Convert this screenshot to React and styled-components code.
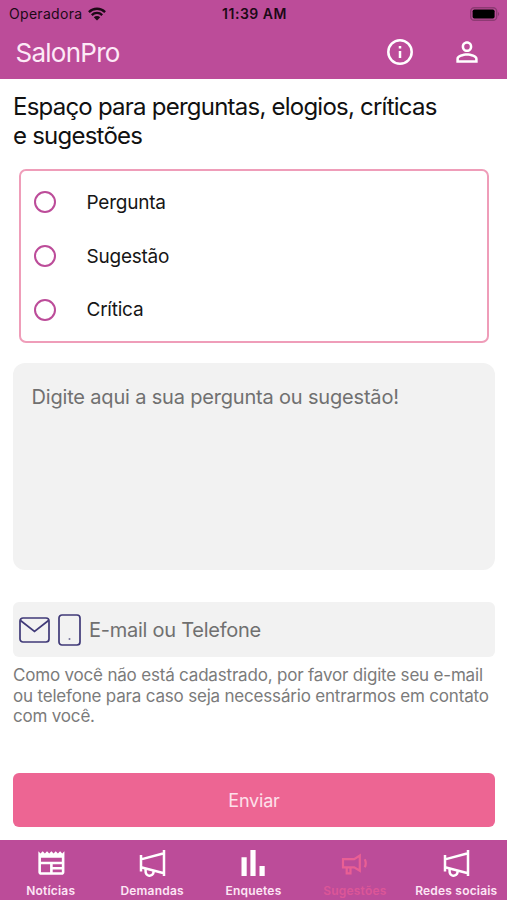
import React from "react";
import styled, { createGlobalStyle } from "styled-components";

const GlobalStyle = createGlobalStyle`
  * {
    box-sizing: border-box;
  }

  body {
    margin: 0;
    background: #fff;
    font-family: Inter, "Liberation Sans", sans-serif;
  }
`;

const Screen = styled.div`
  width: 507px;
  height: 900px;
  display: flex;
  flex-direction: column;
  overflow: hidden;
  background: #fff;
`;

const Header = styled.header`
  height: 79px;
  flex: none;
  background: #bc4c99;
`;

const StatusBar = styled.div`
  height: 27px;
  padding: 0 7px 0 9px;
  display: grid;
  grid-template-columns: 1fr auto 1fr;
  align-items: center;
  color: #1c0916;
`;

const Carrier = styled.div`
  display: flex;
  align-items: center;
  gap: 6px;
  font-size: 14px;
  letter-spacing: 0.3px;
`;

const Clock = styled.div`
  font-size: 14px;
  font-weight: 600;
  letter-spacing: 0.5px;
`;

const Battery = styled.div`
  display: flex;
  justify-content: flex-end;
`;

const AppBar = styled.div`
  height: 50px;
  padding: 0 24px 0 15.5px;
  display: flex;
  align-items: center;
`;

const AppTitle = styled.h1`
  flex: 1;
  margin: 0;
  font-size: 26px;
  font-weight: 400;
  letter-spacing: -0.75px;
  color: #fdeaf7;
`;

const Actions = styled.div`
  display: flex;
  align-items: center;
  gap: 38px;
`;

const IconButton = styled.button`
  display: flex;
  padding: 0;
  border: 0;
  background: none;
  color: #fff;
`;

const Content = styled.main`
  flex: 1;
  padding: 13px 12px 0 13px;
  display: flex;
  flex-direction: column;
`;

const Heading = styled.h2`
  margin: 0;
  font-size: 24px;
  font-weight: 400;
  line-height: 29px;
  letter-spacing: -0.77px;
  white-space: pre-line;
  color: #111;
`;

const Options = styled.div`
  height: 174px;
  margin: 19px 6px 0;
  padding: 4.5px 13px;
  border: 2px solid #ef9db9;
  border-radius: 7px;
`;

const Option = styled.label`
  height: 53.7px;
  display: flex;
  align-items: center;
  gap: 30.5px;
  font-size: 19px;
  line-height: 24px;
  letter-spacing: -0.23px;
  color: #161616;
`;

const OptionText = styled.span`
  padding-top: 1px;
`;

const Radio = styled.span`
  width: 22px;
  height: 22px;
  border: 2.5px solid #bc4c99;
  border-radius: 50%;
`;

const Message = styled.div`
  height: 207px;
  margin-top: 20px;
  padding: 22px 18.5px;
  border-radius: 12px;
  background: #f2f2f2;
  font-size: 20px;
  line-height: 25px;
  letter-spacing: -0.18px;
  color: #707070;
`;

const Contact = styled.div`
  height: 55px;
  margin-top: 32px;
  padding-left: 6px;
  display: flex;
  align-items: center;
  border-radius: 6px;
  background: #f2f2f2;
  font-size: 20px;
  letter-spacing: -0.25px;
  color: #707070;

  svg {
    margin-right: 8px;
  }
`;

const Hint = styled.p`
  margin: 8px 0 0;
  font-size: 17px;
  line-height: 20.5px;
  letter-spacing: -0.19px;
  white-space: pre;
  color: #7b7b7b;
`;

const Submit = styled.button`
  height: 54px;
  margin-top: 46px;
  padding: 1px 0 0;
  border: 0;
  border-radius: 6px;
  background: #ed6593;
  font-family: inherit;
  font-size: 18px;
  letter-spacing: -0.2px;
  color: #fde0ea;
`;

const TabBar = styled.nav`
  height: 60px;
  flex: none;
  display: grid;
  grid-template-columns: repeat(5, 1fr);
  background: #bc4c99;
`;

const Tab = styled.div`
  padding-top: 8px;
  display: flex;
  flex-direction: column;
  align-items: center;
  gap: 5px;
  font-size: 12px;
  font-weight: 600;
  line-height: 15px;
  letter-spacing: 0.2px;
  white-space: nowrap;
  color: ${(props) => (props.$active ? "#dc5697" : "#fde6f5")};

  svg {
    color: ${(props) => (props.$active ? "#e95f94" : "#fff")};
  }
`;

const WifiIcon = () => (
  <svg width="18" height="14" viewBox="0 0 18 14" fill="none" stroke="currentColor" strokeWidth="2.3">
    <path d="M0.9 5.1a11.5 11.5 0 0 1 16.2 0" />
    <path d="M3.8 8.1a7.4 7.4 0 0 1 10.4 0" />
    <path d="M9 13.5 5.8 10.2a4.6 4.6 0 0 1 6.4 0z" fill="currentColor" stroke="none" />
  </svg>
);

const BatteryIcon = () => (
  <svg width="30" height="14" viewBox="0 0 30 14">
    <rect x="0.7" y="0.7" width="26" height="12.6" rx="3.6" fill="none" stroke="#8d3a73" strokeWidth="1.4" />
    <rect x="2.6" y="2.4" width="22" height="9.2" rx="1.8" fill="#000" />
    <path d="M28 5v4c1.6-.6 1.6-3.4 0-4z" fill="#8d3a73" />
  </svg>
);

const InfoIcon = () => (
  <svg width="26" height="26" viewBox="0 0 26 26" fill="none" stroke="currentColor" strokeWidth="2.5">
    <circle cx="13" cy="13" r="11.7" />
    <path d="M13 12v7M13 7v2.6" />
  </svg>
);

const PersonIcon = () => (
  <svg width="32" height="32" viewBox="0 0 24 24" fill="currentColor">
    <path d="M12 5.9a2.1 2.1 0 1 1 0 4.2 2.1 2.1 0 0 1 0-4.2m0 9c2.97 0 6.1 1.46 6.1 2.1v1.1H5.9V17c0-.64 3.13-2.1 6.1-2.1M12 4C9.79 4 8 5.79 8 8s1.79 4 4 4 4-1.79 4-4-1.79-4-4-4m0 9c-2.67 0-8 1.34-8 4v3h16v-3c0-2.66-5.33-4-8-4" />
  </svg>
);

const MailIcon = () => (
  <svg width="31" height="26" viewBox="0 0 31 26" fill="none" stroke="#403a78" strokeWidth="1.7">
    <rect x="1" y="1" width="29" height="24" rx="3" />
    <path d="M1.5 3.5 15.5 14.5 29.5 3.5" />
  </svg>
);

const PhoneIcon = () => (
  <svg width="23" height="32" viewBox="0 0 23 32" fill="none" stroke="#403a78" strokeWidth="1.7">
    <rect x="1" y="1" width="21" height="30" rx="3" />
    <circle cx="11.5" cy="25" r="1" fill="#77759a" stroke="none" />
  </svg>
);

const NewsIcon = () => (
  <svg width="30" height="30" viewBox="0.2 0.5 23 23" fill="currentColor">
    <path d="m22 3-1.67 1.67L18.67 3 17 4.67 15.33 3l-1.66 1.67L12 3l-1.67 1.67L8.67 3 7 4.67 5.33 3 3.67 4.67 2 3v16c0 1.1.9 2 2 2h16c1.1 0 2-.9 2-2zM11 19H4v-6h7zm9 0h-7v-2h7zm0-4h-7v-2h7zm0-4H4V8h16z" />
  </svg>
);

const MegaphoneIcon = () => (
  <svg width="30" height="30" viewBox="-1 -1 30 30" fill="none" stroke="currentColor" strokeWidth="2.5">
    <path d="M3 6v16.5M26 1v26M3 10.4 26 4.2M3 18.2 26 24.2" />
    <path d="M7.6 20v2.2a4 4 0 0 0 8 .9v-1" />
  </svg>
);

const ChartIcon = () => (
  <svg width="30" height="30" viewBox="-1 -1 30 30" fill="currentColor">
    <path d="M2.5 8.2h5.2V27H2.5zM11.4 1h5.2v26h-5.2zM20.5 17h5.2v10h-5.2z" />
  </svg>
);

const SpeakerIcon = () => (
  <svg width="30" height="30" viewBox="-1 -1 30 30" fill="none" stroke="currentColor" strokeWidth="2.2">
    <path d="M2 10.2h11.2l5.6-3.6v15.2l-5.6-3.4H2zM5.7 18.4v6h3.8v-6" />
    <path d="M23.7 10.2q2.2 4 0 8" />
  </svg>
);

const options = ["Pergunta", "Sugestão", "Crítica"];

const tabs = [
  { label: "Notícias", Icon: NewsIcon },
  { label: "Demandas", Icon: MegaphoneIcon },
  { label: "Enquetes", Icon: ChartIcon },
  { label: "Sugestões", Icon: SpeakerIcon, active: true },
  { label: "Redes sociais", Icon: MegaphoneIcon },
];

function App() {
  return (
    <>
      <GlobalStyle />
      <Screen>
        <Header>
          <StatusBar>
            <Carrier>
              Operadora
              <WifiIcon />
            </Carrier>
            <Clock>11:39 AM</Clock>
            <Battery>
              <BatteryIcon />
            </Battery>
          </StatusBar>
          <AppBar>
            <AppTitle>SalonPro</AppTitle>
            <Actions>
              <IconButton aria-label="Info">
                <InfoIcon />
              </IconButton>
              <IconButton aria-label="Perfil">
                <PersonIcon />
              </IconButton>
            </Actions>
          </AppBar>
        </Header>
        <Content>
          <Heading>{"Espaço para perguntas, elogios, críticas\ne sugestões"}</Heading>
          <Options>
            {options.map((option) => (
              <Option key={option}>
                <Radio />
                <OptionText>{option}</OptionText>
              </Option>
            ))}
          </Options>
          <Message>Digite aqui a sua pergunta ou sugestão!</Message>
          <Contact>
            <MailIcon />
            <PhoneIcon />
            E-mail ou Telefone
          </Contact>
          <Hint>
            {"Como você não está cadastrado, por favor digite seu e-mail\nou telefone para caso seja necessário entrarmos em contato\ncom você."}
          </Hint>
          <Submit>Enviar</Submit>
        </Content>
        <TabBar>
          {tabs.map(({ label, Icon, active }) => (
            <Tab key={label} $active={active}>
              <Icon />
              {label}
            </Tab>
          ))}
        </TabBar>
      </Screen>
    </>
  );
}

export default App;
